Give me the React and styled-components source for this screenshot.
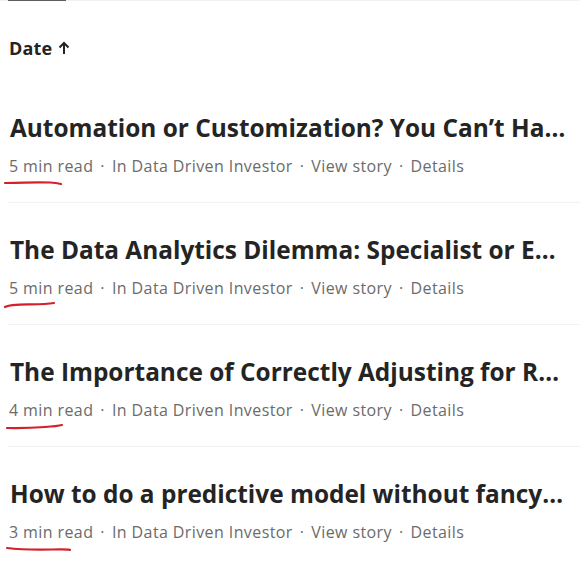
import React from "react";
import styled, { createGlobalStyle } from "styled-components";

const Global = createGlobalStyle`
  html, body { margin: 0; padding: 0; background: #ffffff; }
  body { font-family: "Open Sans", "Liberation Sans", sans-serif; color: #242424; }
`;

const Page = styled.div`
  width: 580px;
  height: 582px;
  overflow: hidden;
  padding-left: 8px;
  box-sizing: border-box;
`;

const TabBar = styled.div`
  display: flex;
  height: 1px;
  background: #f2f2f2;
  margin-left: -8px;
  padding-left: 8px;
`;

const ActiveTab = styled.div`
  width: 58px;
  height: 1px;
  background: #5e5e5e;
`;

const SortHeader = styled.div`
  display: flex;
  align-items: center;
  gap: 6px;
  height: 20px;
  margin: 37px 0 23px 1px;
  font-size: 18px;
  font-weight: 700;
  letter-spacing: 0.2px;
  color: #242424;
`;

const Row = styled.div`
  padding: 31px 0 26px;
  border-bottom: 1px solid ${(p) => (p.$last ? "transparent" : "#f2f2f2")};
`;

const Title = styled.h2`
  margin: 0;
  height: 32px;
  line-height: 32px;
  font-size: 24.4px;
  font-weight: 700;
  color: #242424;
  white-space: nowrap;
  overflow: hidden;
  text-overflow: ellipsis;
  padding: 0 4px 0 2px;
`;

const Meta = styled.div`
  display: flex;
  align-items: center;
  margin-top: 12px;
  height: 20px;
  line-height: 20px;
  font-size: 16px;
  letter-spacing: 0.4px;
  color: #6b6b6b;
  padding-left: 1px;
`;

const ReadTime = styled.span`
  position: relative;
`;

const Scribble = styled.svg`
  position: absolute;
  left: ${(p) => p.$left}px;
  top: 24px;
  overflow: visible;
`;

const Dot = styled.span`
  margin: 0 7px;
`;

const items = [
  { title: "Automation or Customization? You Can’t Ha…", min: 5, line: "M0 3 C15 2.5 35 2 45 2.5 C50 2.7 53 3.2 56 4", left: -4 },
  { title: "The Data Analytics Dilemma: Specialist or E…", min: 5, line: "M0 5 C4 2.5 12 2.5 25 2.3 C35 2.2 43 2 49 1", left: -4 },
  { title: "The Importance of Correctly Adjusting for R…", min: 4, line: "M0 4 C10 4.2 25 4 38 3 C46 2.5 52 1.8 55 1", left: -2 },
  { title: "How to do a predictive model without fancy…", min: 3, line: "M0 2 C12 3.5 30 3.8 45 3.5 C55 3.3 60 3.2 63 3.8", left: -2 },
];

export default function App() {
  return (
    <Page>
      <Global />
      <TabBar>
        <ActiveTab />
      </TabBar>
      <SortHeader>
        Date
        <svg width="12" height="14" viewBox="0 0 12 14">
          <path d="M6 13 V2 M1.5 6.5 L6 2 L10.5 6.5" stroke="#242424" strokeWidth="2" fill="none" />
        </svg>
      </SortHeader>
      {items.map((it, i) => (
        <Row key={i} $last={i === items.length - 1}>
          <Title>{it.title}</Title>
          <Meta>
            <ReadTime>
              {it.min} min read
              <Scribble $left={it.left} width="70" height="8" viewBox="0 0 70 8">
                <path d={it.line} stroke="#d3202a" strokeWidth="2.2" fill="none" strokeLinecap="round" />
              </Scribble>
            </ReadTime>
            <Dot>·</Dot>
            <span>In Data Driven Investor</span>
            <Dot>·</Dot>
            <span>View story</span>
            <Dot>·</Dot>
            <span>Details</span>
          </Meta>
        </Row>
      ))}
    </Page>
  );
}
